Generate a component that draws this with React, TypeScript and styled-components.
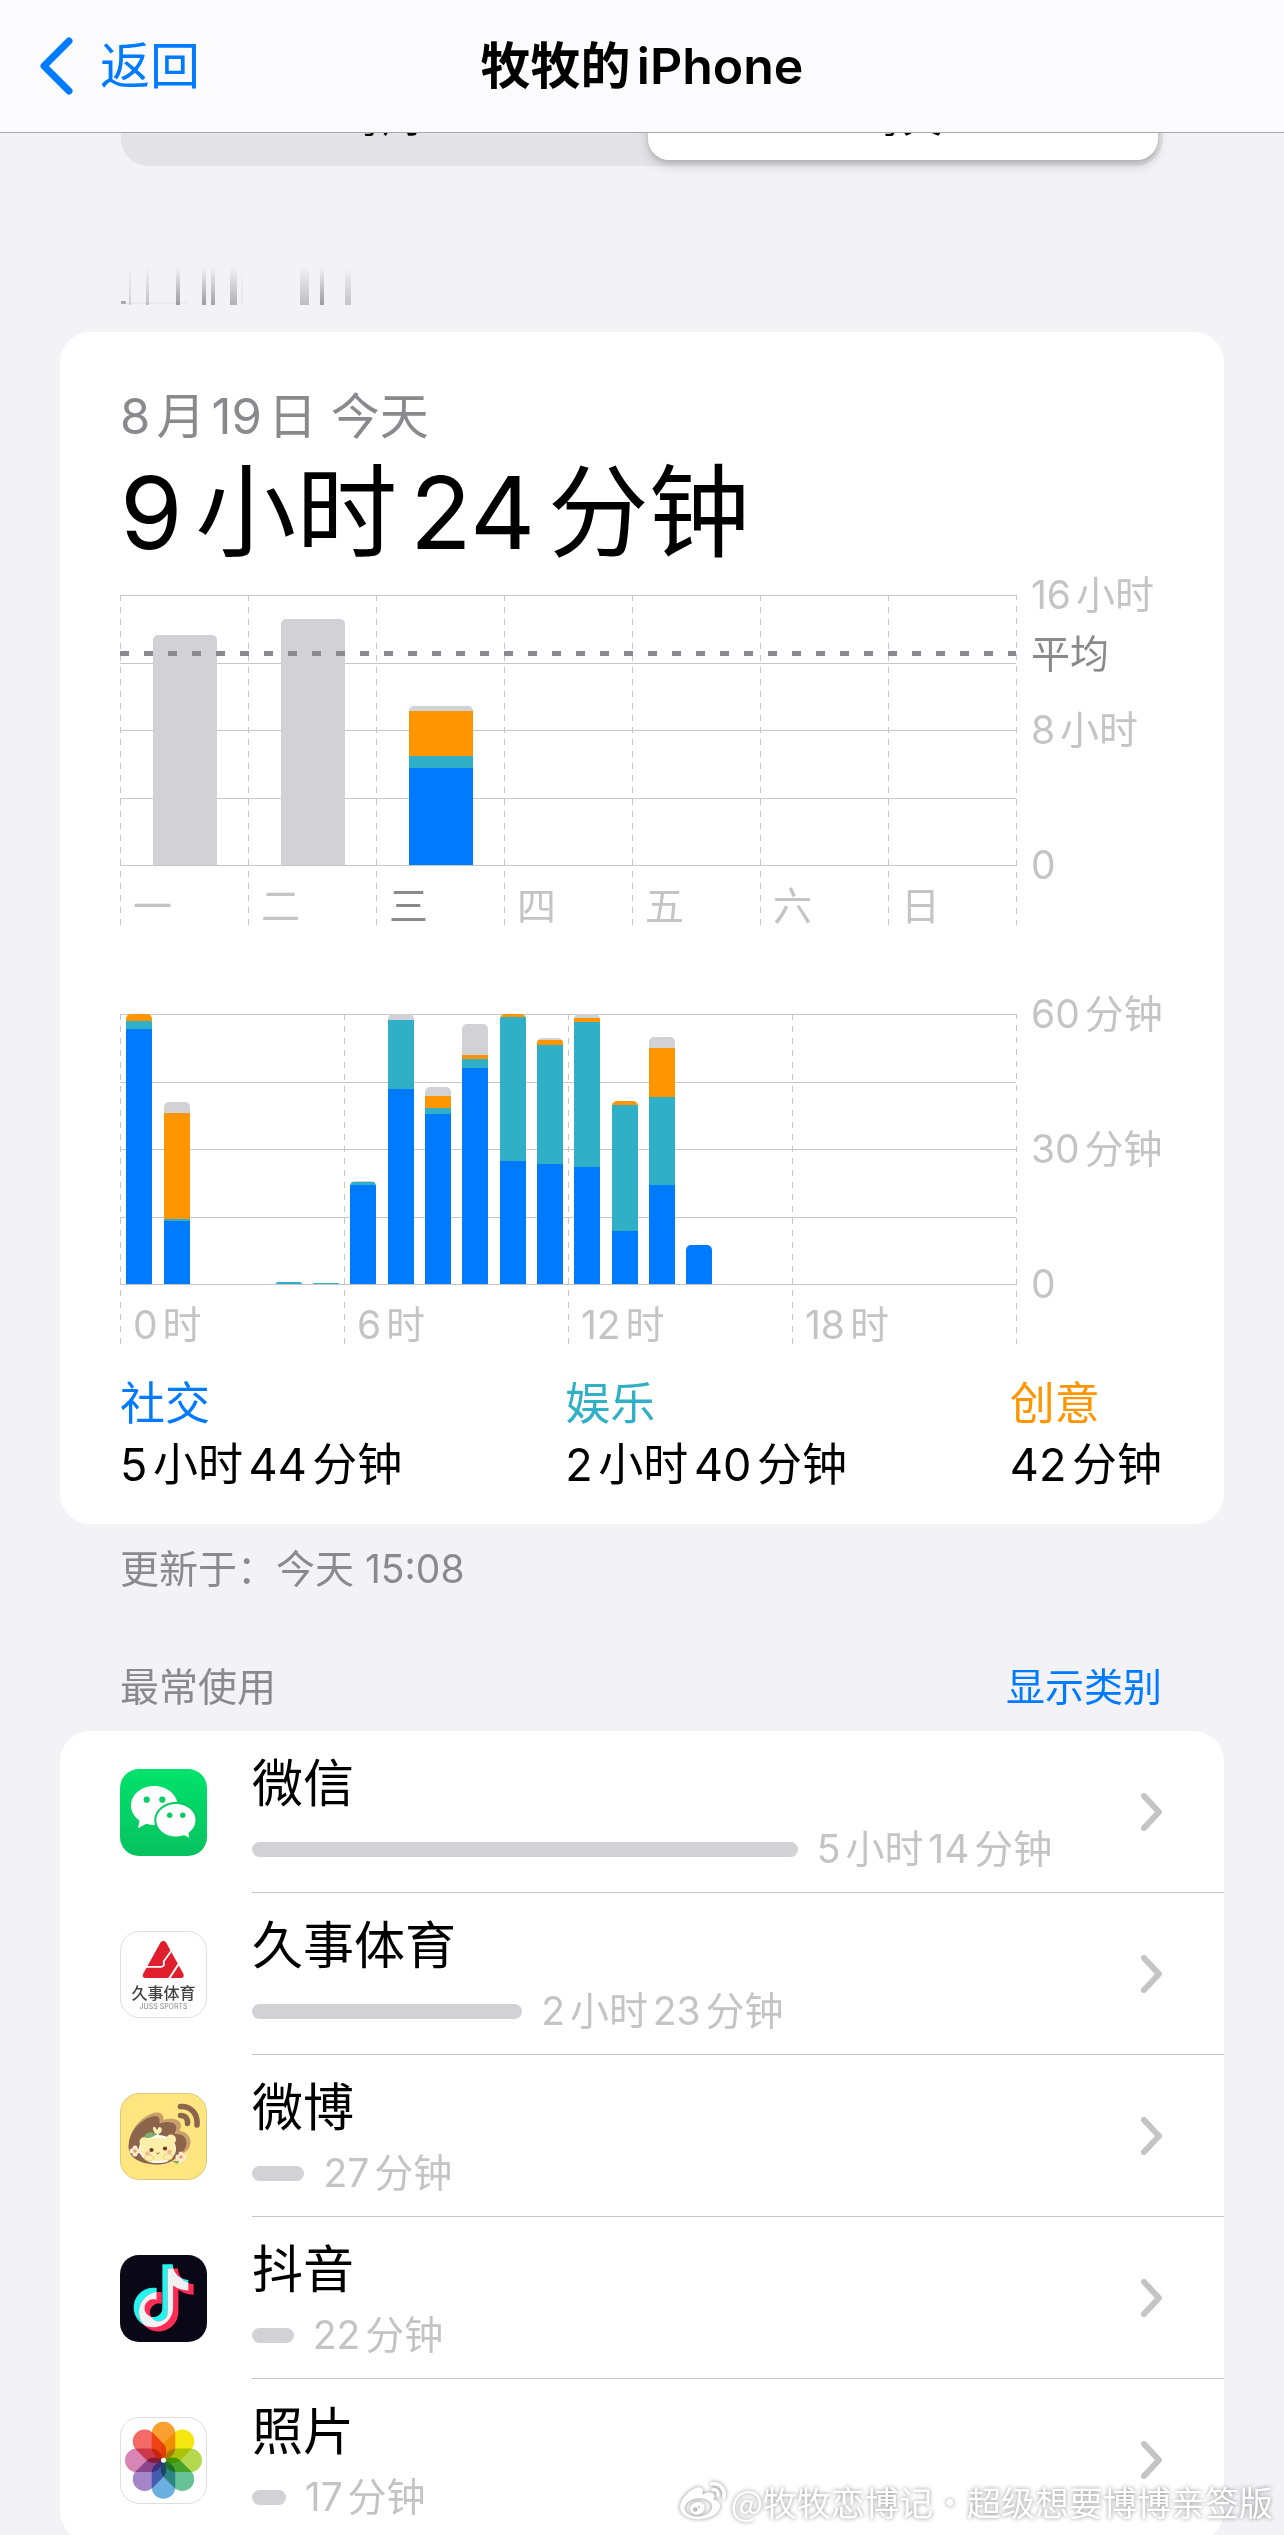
import React from 'react'
import styled, { createGlobalStyle, css } from 'styled-components'
import { FaWeibo } from 'react-icons/fa'

// colors
const BLUE = '#007aff'
const TEAL = '#30b0c7'
const ORANGE = '#ff9500'
const GRAY = '#d1d1d6'
const LINE = '#c6c6c8'
const LABEL = '#c4c4c6'
const SECONDARY = '#8a8a8e'
const PAGE = '#f2f2f7'

const GlobalStyle = createGlobalStyle`
  * {
    box-sizing: border-box;
  }

  body {
    margin: 0;
    background: ${PAGE};
    color: #000;
    font-family: Inter, "Noto Sans CJK SC", sans-serif;
    text-autospace: normal;
  }

  button {
    padding: 0;
    border: 0;
    background: none;
    font: inherit;
    color: inherit;
    cursor: pointer;
  }

  a {
    color: inherit;
    text-decoration: none;
  }

  h1, h2, p, ul {
    margin: 0;
    padding: 0;
    font-weight: 400;
    list-style: none;
  }
`

const Screen = styled.div`
  position: relative;
  display: flex;
  flex-direction: column;
  height: 100vh;
  overflow: hidden;
`

const NavBar = styled.header`
  flex: none;
  display: grid;
  grid-template-columns: 1fr auto 1fr;
  align-items: center;
  height: 133px;
  padding: 0 39px;
  background: #fbfbfd;
  border-bottom: 1px solid #a9a9ab;
`

const BackButton = styled.button`
  display: flex;
  align-items: center;
  gap: 26px;
  justify-self: start;
  color: ${BLUE};
  font-size: 50px;
  line-height: 60px;
`

const NavTitle = styled.h1`
  font-size: 50px;
  line-height: 60px;
  font-weight: 600;
`

const Content = styled.main`
  flex: 1;
  min-height: 0;
  overflow-y: auto;
  scrollbar-width: none;
  padding: 0 60px;
`

const Segments = styled.div`
  display: grid;
  grid-template-columns: 1fr 1fr;
  gap: 10px;
  height: 96px;
  margin: -63px 61px 0;
  padding: 6px 5px 6px 6px;
  border-radius: 27px;
  background: #e3e3e8;
`

const Segment = styled.button<{ $active?: boolean }>`
  border-radius: 21px;
  font-size: 39px;
  line-height: 50px;

  ${({ $active }) => $active && css`
    background: #fff;
    box-shadow: 0 6px 12px rgba(0, 0, 0, 0.15), 0 2px 4px rgba(0, 0, 0, 0.12);
  `}
`

const Streaks = styled.svg`
  display: block;
  margin: 98px 60px 24px;
`

const Card = styled.section`
  border-radius: 30px;
  background: #fff;
  overflow: hidden;
`

const SummaryCard = styled(Card)`
  padding: 55px 62px 29px 60px;
`

const DateLine = styled.p`
  color: ${SECONDARY};
  font-size: 49px;
  line-height: 60px;
`

const Total = styled.h2`
  margin: 8px 0 26px;
  font-size: 101px;
  line-height: 114px;
`

const Chart = styled.div`
  display: grid;
  grid-template-columns: 1fr 145px;
  height: 330px;

  & + & {
    margin-top: 89px;
  }
`

/* grid lines, columns and bars are stacked in one cell */
const Plot = styled.div`
  display: grid;
  grid-template: 271px 59px / 1fr;
  border-right: 1px solid transparent;
  border-image: repeating-linear-gradient(${LINE} 0 6px, transparent 6px 12px) 1;
`

const GridLines = styled.div`
  grid-area: 1 / 1;
  display: grid;
  grid-template-rows: repeat(4, 1fr);
  border-bottom: 1px solid ${LINE};

  span {
    border-top: 1px solid ${LINE};
  }
`

const Columns = styled.div<{ $count: number }>`
  grid-area: 1 / 1 / 3 / 2;
  display: grid;
  grid-template-columns: repeat(${({ $count }) => $count}, 1fr);
`

const Column = styled.div<{ $current?: boolean }>`
  display: flex;
  align-items: flex-end;
  padding: 0 0 0 13px;
  background: repeating-linear-gradient(${LINE} 0 6px, transparent 6px 12px) left / 1px 100% no-repeat;
  color: ${({ $current }) => ($current ? SECONDARY : LABEL)};
  font-size: 39px;
  line-height: 38px;
`

const Bars = styled(Columns)`
  grid-area: 1 / 1;
  align-items: end;
  height: 270px;
`

const Bar = styled.div<{ $wide?: boolean }>`
  display: flex;
  flex-direction: column;
  width: ${({ $wide }) => ($wide ? '50%' : '70%')};
  margin-left: ${({ $wide }) => ($wide ? '26%' : '17%')};
  border-radius: 5px 5px 0 0;
  overflow: hidden;
`

const Piece = styled.div<{ $color: string }>`
  background: ${({ $color }) => $color};
`

const AverageLine = styled.div`
  grid-area: 1 / 1;
  height: 5px;
  margin-top: 56px;
  background: repeating-linear-gradient(90deg, ${SECONDARY} 0 9px, transparent 9px 24px);
  z-index: 1;
`

const Axis = styled.div`
  position: relative;
  height: 270px;
`

const AxisLabel = styled.span<{ $at: number; $dark?: boolean }>`
  position: absolute;
  top: ${({ $at }) => $at}%;
  left: 14px;
  transform: translateY(-50%);
  color: ${({ $dark }) => ($dark ? SECONDARY : LABEL)};
  font-size: 39px;
  line-height: 50px;
  white-space: nowrap;
`

const Legend = styled.ul`
  display: flex;
  justify-content: space-between;
  margin-top: 29px;
  font-size: 45px;
  line-height: 61px;
`

const LegendName = styled.p<{ $color: string }>`
  color: ${({ $color }) => $color};
`

const Updated = styled.p`
  margin: 20px 60px 68px;
  color: ${SECONDARY};
  font-size: 39px;
  line-height: 50px;
`

const SectionHead = styled.div`
  display: flex;
  justify-content: space-between;
  margin: 0 62px 19px 60px;
  color: ${SECONDARY};
  font-size: 39px;
  line-height: 50px;
`

const SectionTitle = styled.h2`
  font-size: 39px;
`

const ShowCategories = styled.button`
  color: ${BLUE};
`

const AppRow = styled.a`
  display: flex;
  align-items: center;
  gap: 45px;
  height: 162px;
  padding-left: 60px;
`

const AppIcon = styled.svg`
  flex: none;
  width: 87px;
  height: 87px;
`

const AppBody = styled.div`
  flex: 1;
  display: flex;
  align-items: center;
  height: 162px;
  padding-right: 61px;
  border-bottom: 1px solid ${LINE};
`

const AppText = styled.div`
  flex: 1;
  padding-top: 5px;
`

const AppName = styled.p`
  font-size: 51px;
  line-height: 60px;
`

const Usage = styled.div`
  display: flex;
  align-items: center;
  gap: 19px;
  margin-top: 10px;
  color: ${LABEL};
  font-size: 39px;
  line-height: 50px;
  white-space: nowrap;
`

const UsageBar = styled.span`
  height: 15px;
  border-radius: 8px;
  background: ${GRAY};
`

const Watermark = styled.div`
  position: absolute;
  right: 11px;
  bottom: 8px;
  display: flex;
  align-items: center;
  gap: 5px;
  color: #fff;
  font-family: "Noto Sans CJK SC", sans-serif;
  font-size: 34px;
  line-height: 50px;
  text-autospace: no-autospace;
  filter: drop-shadow(0 0 2px rgba(0, 0, 0, 0.45));
`

// each piece is [color, pixels of the 270 high plot], top to bottom
type Stack = [string, number][]

const week: { day: string; current?: boolean; stack: Stack }[] = [
  { day: '一', stack: [[GRAY, 230]] },
  { day: '二', stack: [[GRAY, 246]] },
  { day: '三', current: true, stack: [[GRAY, 5], [ORANGE, 45], [TEAL, 12], [BLUE, 97]] },
  { day: '四', stack: [] },
  { day: '五', stack: [] },
  { day: '六', stack: [] },
  { day: '日', stack: [] },
]

const hours: Stack[] = [
  [[ORANGE, 7], [TEAL, 8], [BLUE, 255]],
  [[GRAY, 11], [ORANGE, 106], [TEAL, 2], [BLUE, 63]],
  [],
  [],
  [[TEAL, 2]],
  [[TEAL, 1]],
  [[GRAY, 1], [TEAL, 3], [BLUE, 99]],
  [[GRAY, 6], [TEAL, 69], [BLUE, 195]],
  [[GRAY, 9], [ORANGE, 12], [TEAL, 6], [BLUE, 170]],
  [[GRAY, 31], [ORANGE, 4], [TEAL, 9], [BLUE, 216]],
  [[ORANGE, 3], [TEAL, 144], [BLUE, 123]],
  [[GRAY, 2], [ORANGE, 5], [TEAL, 119], [BLUE, 120]],
  [[GRAY, 4], [ORANGE, 4], [TEAL, 145], [BLUE, 117]],
  [[ORANGE, 4], [TEAL, 126], [BLUE, 53]],
  [[GRAY, 11], [ORANGE, 49], [TEAL, 88], [BLUE, 99]],
  [[BLUE, 39]],
  [], [], [], [], [], [], [], [],
]

const legend = [
  { name: '社交', color: BLUE, time: '5小时44分钟' },
  { name: '娱乐', color: TEAL, time: '2小时40分钟' },
  { name: '创意', color: ORANGE, time: '42分钟' },
]

// [x, width, opacity]
const streaks = [
  [9, 2, 0.25], [26, 3, 0.35], [56, 4, 0.65], [82, 4, 0.65], [91, 4, 0.6],
  [110, 7, 0.5], [121, 2, 0.1], [180, 9, 0.4], [200, 4, 0.65], [225, 6, 0.35],
]

const TILE = { width: 86, height: 86, x: 0.5, y: 0.5, rx: 19 }

const WeChatIcon = () => (
  <AppIcon viewBox="0 0 87 87">
    <defs>
      <linearGradient id="wechat" x1="0" y1="0" x2="0" y2="1">
        <stop offset="0" stopColor="#02e36c" />
        <stop offset="1" stopColor="#07c160" />
      </linearGradient>
    </defs>
    <rect width="87" height="87" rx="19" fill="url(#wechat)" />
    <path fill="#fff" d="M34.3 17C21.4 17 11 25.7 11 36.6c0 6 3.2 11.3 8.4 14.9L18 59.3l8.4-4.5c2.5.8 5.2 1.2 7.9 1.2 12.900 0 23.300-8.700 23.300-19.400S47.200 17 34.300 17z" />
    <circle cx="26.700" cy="30.700" r="3.100" fill="#05cf65" />
    <circle cx="42.300" cy="30.700" r="3.100" fill="#05cf65" />
    <path fill="#fff" stroke="#05cd64" strokeWidth="2" d="M56 34c11.500 0 20.500 7.700 20.500 17.300 0 5.200-2.700 9.800-7 13l1.200 6.400-6.900-3.500c-2.400.8-5 1.300-7.800 1.300-11.500 0-20.700-7.700-20.700-17.200S44.500 34 56 34z" />
    <circle cx="49.700" cy="46.200" r="2.700" fill="#05cb63" />
    <circle cx="62.700" cy="46.200" r="2.700" fill="#05cb63" />
  </AppIcon>
)

const JussIcon = () => (
  <AppIcon viewBox="0 0 87 87">
    <rect {...TILE} fill="#fff" stroke="#dedee0" />
    <path fill="#df1f2d" d="M40.500 11.500q2.800-3.600 5.600 0L63.500 43q1 4-2.500 4H25.500q-3.500 0-2.500-4z" />
    <path fill="none" stroke="#fff" strokeWidth="1.800" d="M25 35.800h16q4.200-.2 2.600-5.200L53 17.500" />
    <path fill="none" stroke="#fff" strokeWidth="2" d="M48.500 48.500L60 31" />
    <text x="43.500" y="68" textAnchor="middle" fontFamily="Noto Sans CJK SC" fontSize="16" fontWeight="500" fill="#444">久事体育</text>
    <text x="43.500" y="78" textAnchor="middle" fontFamily="Inter" fontSize="7" fill="#888">JUSS SPORTS</text>
  </AppIcon>
)

const WeiboIcon = () => (
  <AppIcon viewBox="0 0 87 87">
    <rect {...TILE} fill="#fee57f" stroke="#dcc77a" />
    <path
      fill="#c9a06b"
      d="M9 52C9 38 20 24 34 20c6-1.500 10 1 9.500 7 6-2 14-2 17 3 1.500 3 0 5-1 8 6 .5 11 5 11 11 0 7-5 10-10 13l-20 6z"
    />
    <path
      fill="#8c644c"
      d="M8.500 53C9 40 18 28 32 23.500c6-2 8.500 1 7.500 7 5-2 13-2.500 16 1.500 2 3 0 6-1 9 7-.5 12 3 12 8.500 0 6-4 10-8 13-5 5.500-11 9-20 9C20 71.500 8.500 65 8.500 53z"
    />
    <g fill="none" stroke="#8c644c" strokeWidth="5.500" strokeLinecap="round">
      <path d="M60.500 13.500C71 13 78 21 77 32" />
      <path d="M60.500 22.500c5 0 7.500 3.500 7 8" />
    </g>
    <ellipse cx="37.500" cy="56" rx="18.500" ry="14" fill="#fff" />
    <circle cx="24.500" cy="49" r="5" fill="#fcefa9" />
    <circle cx="51" cy="46.500" r="5" fill="#fcefa9" />
    <ellipse cx="38" cy="56.500" rx="17.500" ry="12" fill="#fcefa9" />
    <path fill="#fff" d="M26 66q11 4 24 0l-3 3q-9 2-18 0z" />
    <path fill="#7fae6b" d="M24 44c2-5 7-6 12-3-3 4-8 5-12 3z" />
    <path fill="#fdf0b0" d="M37 42c-5-4-5-9-2-8l2 3 2-3c4 0 4 5-1 8z" />
    <circle cx="31.500" cy="57" r="2.100" fill="#6b3a22" />
    <circle cx="45" cy="55.500" r="2.100" fill="#6b3a22" />
    <circle cx="27.500" cy="60.500" r="2.300" fill="#f9b9a0" />
    <circle cx="49.500" cy="59" r="2.300" fill="#f9b9a0" />
    <path d="M36.500 60q1.500 2 3-.5" fill="none" stroke="#9a5a35" />
    <ellipse cx="29" cy="65" rx="4.500" ry="3" fill="#fcefa9" stroke="#e0b860" strokeWidth=".6" />
    <ellipse cx="48" cy="64" rx="4.500" ry="3" fill="#fcefa9" stroke="#e0b860" strokeWidth=".6" />
    <path fill="#7fae6b" d="M52 68l5 3 3-3z" />
    {[[15, 58], [61, 64]].map(([x, y]) => (
      <g key={x} fill="#fdecd4">
        <circle cx={x} cy={y - 3} r="2.500" />
        <circle cx={x + 3} cy={y} r="2.500" />
        <circle cx={x} cy={y + 3} r="2.500" />
        <circle cx={x - 3} cy={y} r="2.500" />
        <circle cx={x} cy={y} r="1.800" fill="#f39c5a" />
      </g>
    ))}
  </AppIcon>
)

const NOTE =
  'M12.525.02c1.31-.02 2.61-.01 3.91-.02.08 1.53.63 3.09 1.75 4.17 1.12 1.11 2.7 1.62 4.24 1.79v4.03c-1.44-.05-2.89-.35-4.2-.97-.57-.26-1.1-.59-1.62-.93-.01 2.92.01 5.84-.02 8.75-.08 1.4-.54 2.79-1.35 3.94-1.31 1.92-3.58 3.17-5.91 3.21-1.43.08-2.86-.31-4.08-1.03-2.02-1.19-3.44-3.37-3.65-5.71-.02-.5-.03-1-.01-1.49.18-1.9 1.12-3.72 2.58-4.96 1.66-1.44 3.98-2.13 6.15-1.72.02 1.48-.04 2.96-.04 4.44-.99-.32-2.15-.23-3.02.37-.63.41-1.11 1.04-1.36 1.75-.21.51-.15 1.07-.14 1.61.24 1.64 1.82 3.02 3.5 2.87 1.12-.01 2.19-.66 2.77-1.61.19-.33.4-.67.41-1.06.1-1.79.06-3.57.07-5.36.01-4.03-.01-8.05.02-12.07z'

const DouyinIcon = () => (
  <AppIcon viewBox="0 0 87 87">
    <defs>
      <clipPath id="note">
        <path d={NOTE} transform="translate(9.600 9.300) scale(2.620)" />
      </clipPath>
    </defs>
    <rect width="87" height="87" rx="19" fill="#0a0817" />
    <path d={NOTE} fill="#25f4ee" transform="translate(9.600 9.300) scale(2.620)" />
    <path d={NOTE} fill="#fe2c55" transform="translate(14.900 13.600) scale(2.620)" />
    <g clipPath="url(#note)">
      <path d={NOTE} fill="#f1f1f4" transform="translate(14.900 13.600) scale(2.620)" />
    </g>
  </AppIcon>
)

const petals = ['#faa030', '#f4e60e', '#b4d84e', '#67c295', '#6aafe0', '#a286c8', '#d884b4', '#f46a66']

const Petal = styled.rect`
  mix-blend-mode: multiply;
`

const PhotosIcon = () => (
  <AppIcon viewBox="0 0 87 87">
    <rect {...TILE} fill="#fff" stroke="#dedee0" />
    {petals.map((fill, i) => (
      <Petal
        key={fill}
        x="31.700"
        y="4.800"
        width="23.600"
        height="37.600"
        rx="11.800"
        fill={fill}
        transform={`rotate(${i * 45} 43.500 43.300)`}
      />
    ))}
    <circle cx="43.500" cy="43.300" r="2.500" fill="#fff" />
  </AppIcon>
)

const apps = [
  { name: '微信', Icon: WeChatIcon, time: '5小时14分钟', share: 61.4 },
  { name: '久事体育', Icon: JussIcon, time: '2小时23分钟', share: 30.4 },
  { name: '微博', Icon: WeiboIcon, time: '27分钟', share: 5.9 },
  { name: '抖音', Icon: DouyinIcon, time: '22分钟', share: 4.7 },
  { name: '照片', Icon: PhotosIcon, time: '17分钟', share: 3.8 },
]

function StackedBar({ stack, wide }: { stack: Stack; wide?: boolean }) {
  return (
    <Bar $wide={wide}>
      {stack.map(([color, size], i) => (
        <Piece key={i} $color={color} style={{ height: size }} />
      ))}
    </Bar>
  )
}

function Lines() {
  return (
    <GridLines>
      <span />
      <span />
      <span />
      <span />
    </GridLines>
  )
}

function App() {
  return (
    <Screen>
      <GlobalStyle />
      <NavBar>
        <BackButton>
          <svg width="35" height="58" viewBox="0 0 35 58" fill="none" stroke="currentColor" strokeWidth="7" strokeLinecap="round" strokeLinejoin="round">
            <path d="M30 4L5 29l25 25" />
          </svg>
          返回
        </BackButton>
        <NavTitle>牧牧的iPhone</NavTitle>
      </NavBar>

      <Content>
        <Segments>
          <Segment>每周</Segment>
          <Segment $active>每天</Segment>
        </Segments>

        <Streaks width="232" height="44" viewBox="0 0 232 44" aria-hidden="true">
          <defs>
            <linearGradient id="streak" x1="0" y1="0" x2="0" y2="1">
              <stop offset="0" stopColor="#6d6d72" stopOpacity="0" />
              <stop offset="1" stopColor="#6d6d72" />
            </linearGradient>
          </defs>
          {streaks.map(([x, width, opacity]) => (
            <rect key={x} x={x} y="3" width={width} height="38" fill="url(#streak)" opacity={opacity} />
          ))}
          <rect x="1" y="37" width="5" height="3" fill="#8a8a8e" opacity=".7" />
          <rect x="6" y="38" width="60" height="2" fill="#8a8a8e" opacity=".08" />
        </Streaks>

        <SummaryCard>
          <DateLine>8月19日 今天</DateLine>
          <Total>9小时24分钟</Total>

          <Chart>
            <Plot>
              <Lines />
              <Columns $count={7}>
                {week.map(({ day, current }) => (
                  <Column key={day} $current={current}>{day}</Column>
                ))}
              </Columns>
              <Bars $count={7}>
                {week.map(({ day, stack }) => <StackedBar key={day} stack={stack} wide />)}
              </Bars>
              <AverageLine />
            </Plot>
            <Axis>
              <AxisLabel $at={0}>16小时</AxisLabel>
              <AxisLabel $at={22} $dark>平均</AxisLabel>
              <AxisLabel $at={50}>8小时</AxisLabel>
              <AxisLabel $at={100}>0</AxisLabel>
            </Axis>
          </Chart>

          <Chart>
            <Plot>
              <Lines />
              <Columns $count={4}>
                {[0, 6, 12, 18].map((hour) => (
                  <Column key={hour}>{hour}时</Column>
                ))}
              </Columns>
              <Bars $count={24}>
                {hours.map((stack, i) => <StackedBar key={i} stack={stack} />)}
              </Bars>
            </Plot>
            <Axis>
              <AxisLabel $at={0}>60分钟</AxisLabel>
              <AxisLabel $at={50}>30分钟</AxisLabel>
              <AxisLabel $at={100}>0</AxisLabel>
            </Axis>
          </Chart>

          <Legend>
            {legend.map(({ name, color, time }) => (
              <li key={name}>
                <LegendName $color={color}>{name}</LegendName>
                <p>{time}</p>
              </li>
            ))}
          </Legend>
        </SummaryCard>

        <Updated>更新于：今天 15:08</Updated>

        <SectionHead>
          <SectionTitle>最常使用</SectionTitle>
          <ShowCategories>显示类别</ShowCategories>
        </SectionHead>

        <Card>
          {apps.map(({ name, Icon, time, share }) => (
            <AppRow key={name} href="#">
              <Icon />
              <AppBody>
                <AppText>
                  <AppName>{name}</AppName>
                  <Usage>
                    <UsageBar style={{ width: `${share}%` }} />
                    {time}
                  </Usage>
                </AppText>
                <svg width="22" height="38" viewBox="0 0 22 38" fill="none" stroke={LABEL} strokeWidth="6" strokeLinecap="round" strokeLinejoin="round">
                  <path d="M3 3l15 16L3 35" />
                </svg>
              </AppBody>
            </AppRow>
          ))}
        </Card>
      </Content>

      <Watermark>
        <FaWeibo size={46} />
        @牧牧恋博记・超级想要博博亲签版
      </Watermark>
    </Screen>
  )
}

export default App
